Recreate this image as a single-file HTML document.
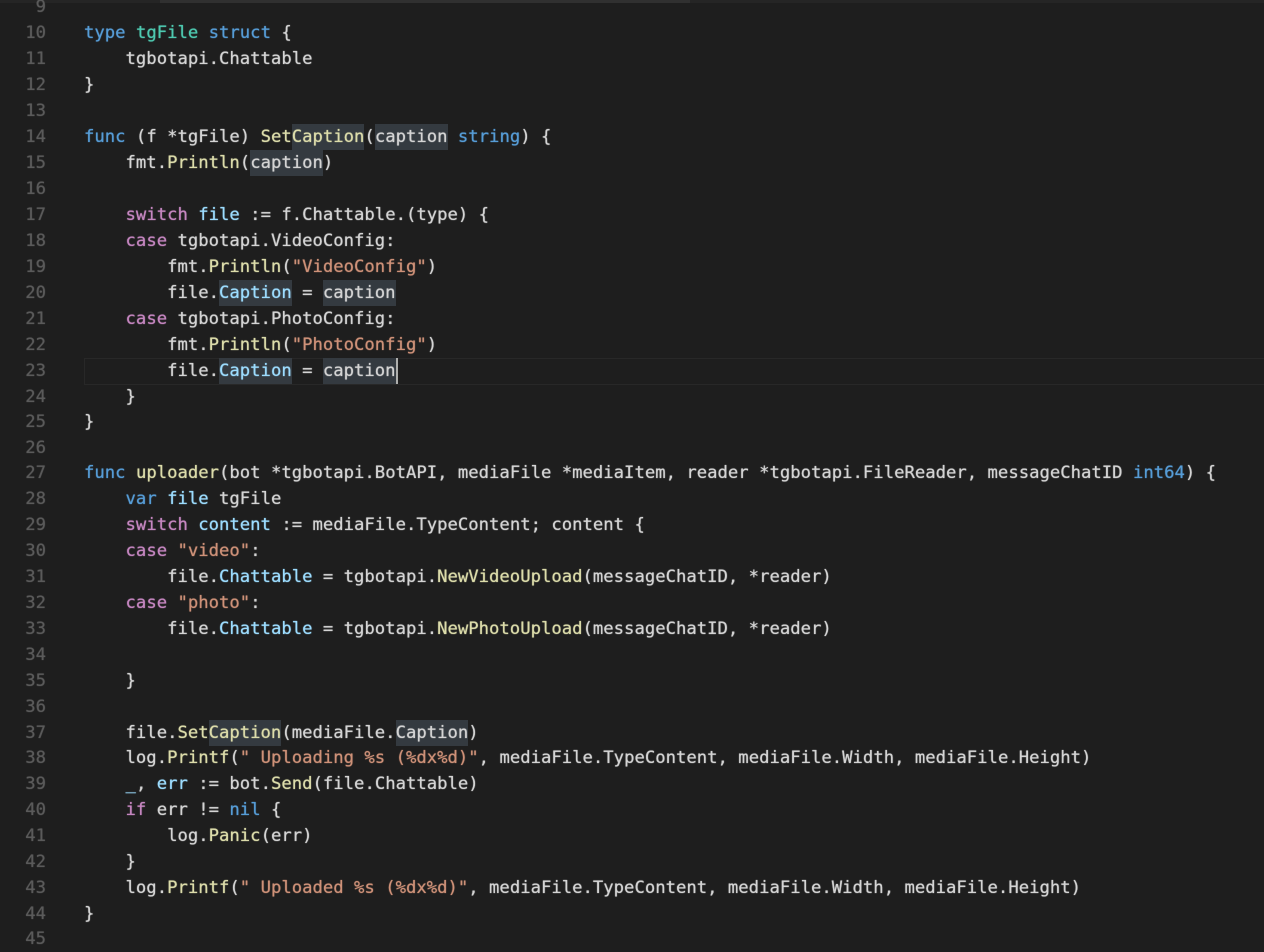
<!DOCTYPE html>
<html><head><meta charset="utf-8"><style>
html,body{margin:0;padding:0;background:#1e1e1e;width:1264px;height:945px;overflow:hidden}
#top{position:absolute;left:0;top:0;width:1264px;height:3px;background:#252525}
#top2{position:absolute;left:160px;top:0;width:530px;height:3px;background:#303030}
#cur{position:absolute;left:84px;top:358px;width:1180px;height:25px;border:1px solid #282828;border-right:0;box-sizing:content-box}
#caret{position:absolute;left:396px;top:358px;width:2px;height:26px;background:#aeafad}
.l,.n{position:absolute;height:26px;line-height:26px;font-family:"DejaVu Sans Mono","Liberation Mono",monospace;font-size:17.26px;white-space:pre;text-shadow:0 0 1px currentColor}
.l{left:84px;color:#d4d4d4}
.n{left:0;width:46px;text-align:right;color:#5a5a5a}
.k{color:#569cd6}.c{color:#c586c0}.s{color:#ce9178}.f{color:#dcdcaa}.v{color:#9cdcfe}.t{color:#4ec9b0}
.h{background:#343a40;display:inline-block;height:26px;vertical-align:top}
</style></head><body>
<div id="top"></div><div id="top2"></div><div id="cur"></div>
<div class="n" style="top:-6px">9</div>
<div class="n" style="top:20px">10</div><div class="l" style="top:20px"><span class="k">type</span> <span class="t">tgFile</span> <span class="k">struct</span> {</div>
<div class="n" style="top:46px">11</div><div class="l" style="top:46px">    tgbotapi.Chattable</div>
<div class="n" style="top:72px">12</div><div class="l" style="top:72px">}</div>
<div class="n" style="top:98px">13</div>
<div class="n" style="top:124px">14</div><div class="l" style="top:124px"><span class="k">func</span> (f *tgFile) <span class="f">Set<span class="h">Caption</span></span>(<span class="h">caption</span> <span class="k">string</span>) {</div>
<div class="n" style="top:150px">15</div><div class="l" style="top:150px">    fmt.<span class="f">Println</span>(<span class="h">caption</span>)</div>
<div class="n" style="top:176px">16</div>
<div class="n" style="top:202px">17</div><div class="l" style="top:202px">    <span class="c">switch</span> <span class="v">file</span> := f.Chattable.(type) {</div>
<div class="n" style="top:228px">18</div><div class="l" style="top:228px">    <span class="c">case</span> tgbotapi.VideoConfig:</div>
<div class="n" style="top:254px">19</div><div class="l" style="top:254px">        fmt.<span class="f">Println</span>(<span class="s">"VideoConfig"</span>)</div>
<div class="n" style="top:280px">20</div><div class="l" style="top:280px">        file.<span class="h v">Caption</span> = <span class="h">caption</span></div>
<div class="n" style="top:306px">21</div><div class="l" style="top:306px">    <span class="c">case</span> tgbotapi.PhotoConfig:</div>
<div class="n" style="top:332px">22</div><div class="l" style="top:332px">        fmt.<span class="f">Println</span>(<span class="s">"PhotoConfig"</span>)</div>
<div class="n" style="top:358px">23</div><div class="l" style="top:358px">        file.<span class="h v">Caption</span> = <span class="h">caption</span></div>
<div class="n" style="top:384px">24</div><div class="l" style="top:384px">    }</div>
<div class="n" style="top:409px">25</div><div class="l" style="top:409px">}</div>
<div class="n" style="top:435px">26</div>
<div class="n" style="top:460px">27</div><div class="l" style="top:460px"><span class="k">func</span> <span class="f">uploader</span>(bot *tgbotapi.BotAPI, mediaFile *mediaItem, reader *tgbotapi.FileReader, messageChatID <span class="k">int64</span>) {</div>
<div class="n" style="top:486px">28</div><div class="l" style="top:486px">    <span class="k">var</span> <span class="v">file</span> tgFile</div>
<div class="n" style="top:512px">29</div><div class="l" style="top:512px">    <span class="c">switch</span> <span class="v">content</span> := mediaFile.TypeContent; content {</div>
<div class="n" style="top:538px">30</div><div class="l" style="top:538px">    <span class="c">case</span> <span class="s">"video"</span>:</div>
<div class="n" style="top:564px">31</div><div class="l" style="top:564px">        file.<span class="v">Chattable</span> = tgbotapi.<span class="f">NewVideoUpload</span>(messageChatID, *reader)</div>
<div class="n" style="top:590px">32</div><div class="l" style="top:590px">    <span class="c">case</span> <span class="s">"photo"</span>:</div>
<div class="n" style="top:616px">33</div><div class="l" style="top:616px">        file.<span class="v">Chattable</span> = tgbotapi.<span class="f">NewPhotoUpload</span>(messageChatID, *reader)</div>
<div class="n" style="top:642px">34</div>
<div class="n" style="top:668px">35</div><div class="l" style="top:668px">    }</div>
<div class="n" style="top:694px">36</div>
<div class="n" style="top:720px">37</div><div class="l" style="top:720px">    file.<span class="f">Set<span class="h">Caption</span></span>(mediaFile.<span class="h">Caption</span>)</div>
<div class="n" style="top:745px">38</div><div class="l" style="top:745px">    log.<span class="f">Printf</span>(<span class="s">" Uploading %s (%dx%d)"</span>, mediaFile.TypeContent, mediaFile.Width, mediaFile.Height)</div>
<div class="n" style="top:771px">39</div><div class="l" style="top:771px">    <span class="v">_</span>, <span class="v">err</span> := bot.<span class="f">Send</span>(file.Chattable)</div>
<div class="n" style="top:797px">40</div><div class="l" style="top:797px">    <span class="c">if</span> err != <span class="k">nil</span> {</div>
<div class="n" style="top:823px">41</div><div class="l" style="top:823px">        log.<span class="f">Panic</span>(err)</div>
<div class="n" style="top:849px">42</div><div class="l" style="top:849px">    }</div>
<div class="n" style="top:875px">43</div><div class="l" style="top:875px">    log.<span class="f">Printf</span>(<span class="s">" Uploaded %s (%dx%d)"</span>, mediaFile.TypeContent, mediaFile.Width, mediaFile.Height)</div>
<div class="n" style="top:901px">44</div><div class="l" style="top:901px">}</div>
<div class="n" style="top:926px">45</div>
<div id="caret"></div>
</body></html>
